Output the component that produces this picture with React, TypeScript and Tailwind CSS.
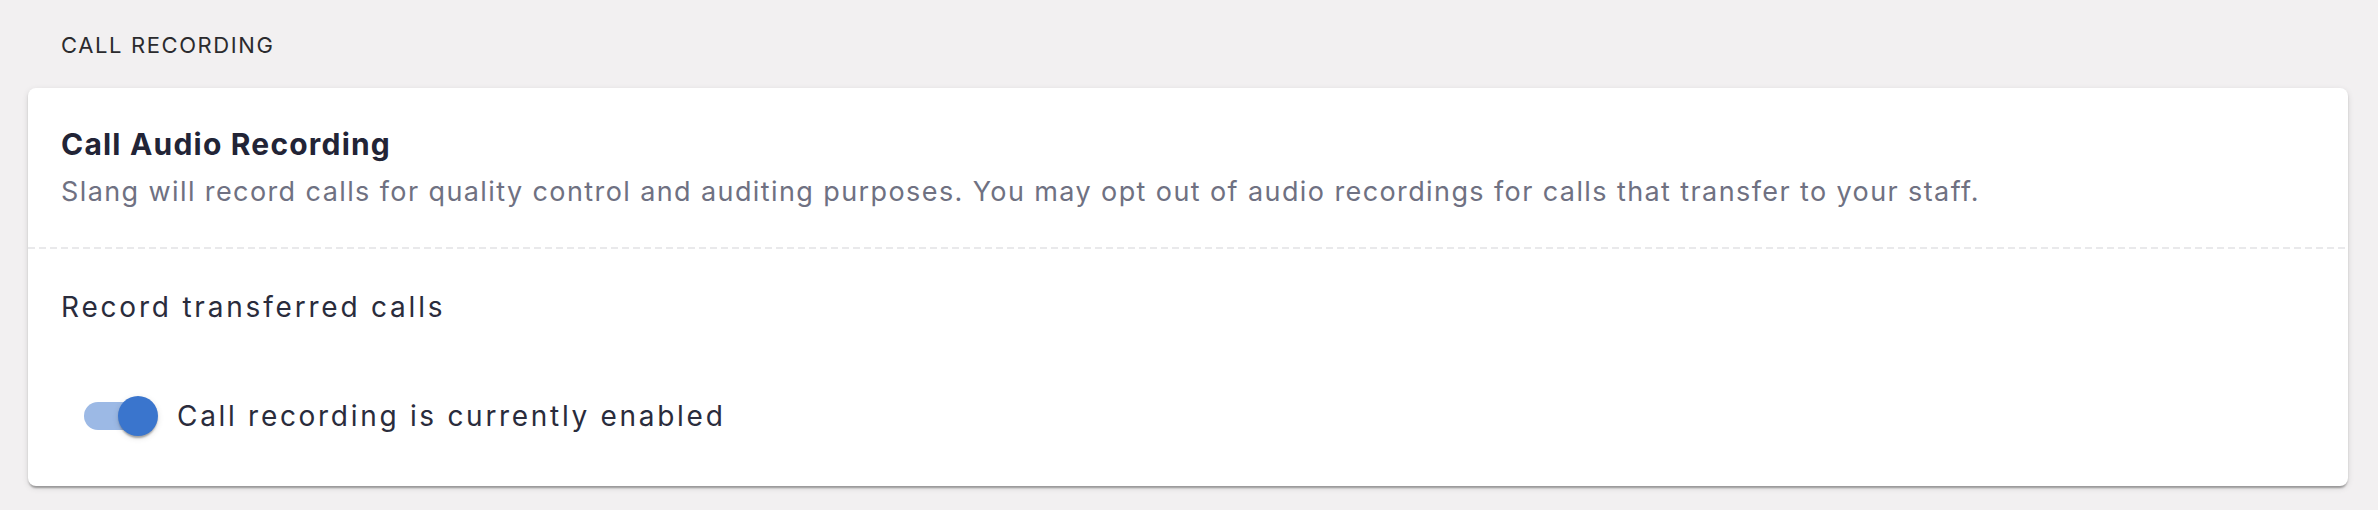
import React from "react";

export default function App() {
  return (
    <div className="min-h-[510px] w-full bg-[#f2f0f1] pt-[30px] pb-[24px] pl-[28px] pr-[30px] font-['Inter',_'Liberation_Sans',_sans-serif]">
      <div className="pl-[33px] text-[22px] leading-[30px] tracking-[1.6px] text-[#2b2b2e]">
        CALL RECORDING
      </div>
      <div className="mt-[28px] rounded-[8px] bg-white shadow-[0_4px_2px_-2px_rgba(0,0,0,0.2),0_2px_2px_0_rgba(0,0,0,0.14),0_2px_6px_0_rgba(0,0,0,0.12)]">
        <div className="px-[33px] pt-[36px] pb-[37px]">
          <div className="text-[30px] leading-[40px] font-bold tracking-[1.2px] text-[#222436]">
            Call Audio Recording
          </div>
          <div className="mt-[10px] text-[27px] leading-[36px] tracking-[1.4px] text-[#6f7182] whitespace-nowrap">
            Slang will record calls for quality control and auditing purposes. You may opt out of audio recordings for calls that transfer to your staff.
          </div>
        </div>
        <div className="h-[2px] bg-[repeating-linear-gradient(to_right,#e9e9eb_0px,#e9e9eb_7px,transparent_7px,transparent_11px)]" />
        <div className="px-[33px] pt-[38px] pb-[50px]">
          <div className="text-[28px] leading-[40px] tracking-[2.8px] text-[#2a2c3c]">
            Record transferred calls
          </div>
          <div className="mt-[69px] flex items-center pl-[23px]">
            <div className="relative h-[40px] w-[74px] shrink-0">
              <div className="absolute left-0 top-[6px] h-[28px] w-[68px] rounded-full bg-[#9cb9e5]" />
              <div className="absolute left-[34px] top-0 h-[40px] w-[40px] rounded-full bg-[#3a75cd] shadow-[0_4px_2px_-2px_rgba(0,0,0,0.2),0_2px_2px_0_rgba(0,0,0,0.14),0_2px_6px_0_rgba(0,0,0,0.12)]" />
            </div>
            <div className="ml-[19px] text-[28px] leading-[40px] tracking-[2.7px] text-[#2a2c3c]">
              Call recording is currently enabled
            </div>
          </div>
        </div>
      </div>
    </div>
  );
}
